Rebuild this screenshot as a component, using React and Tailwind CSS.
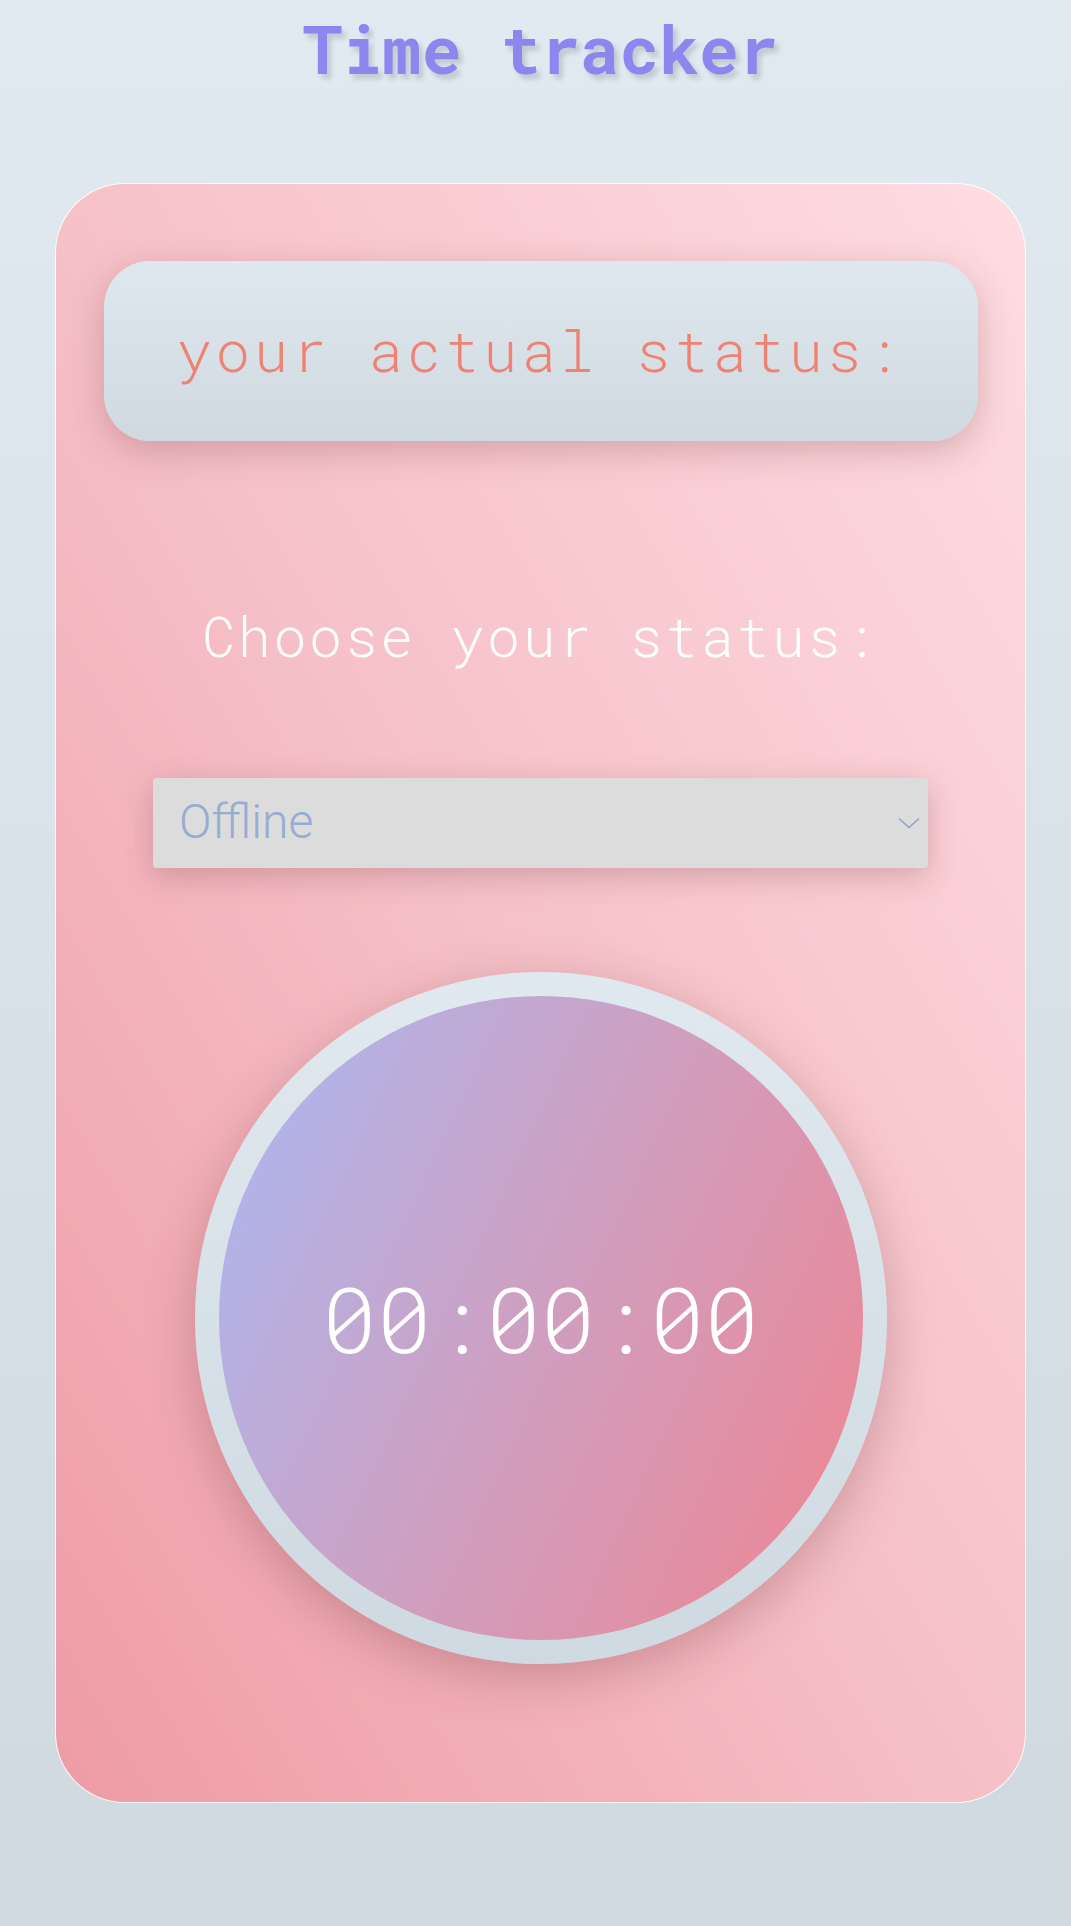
export default function App() {
  const mono = "font-['Roboto_Mono','DejaVu_Sans_Mono',monospace]";
  return (
    <div className="min-h-[1926px] w-full bg-linear-to-b from-[#e1e9f1] to-[#d0d8e0] overflow-hidden">
      <h1
        className={`${mono} pt-[16px] pl-[10px] text-center text-[66px] leading-none font-bold text-[#8b87ef] [text-shadow:4px_5px_5px_rgba(0,0,0,0.14)]`}
      >
        Time tracker
      </h1>

      <div className="ml-[55px] mt-[101px] w-[971px] h-[1620px] rounded-[70px] border border-white/90 bg-linear-to-tr from-[#ee9ba6] via-[#f6c1c8] to-[#fedde2] flex flex-col items-center pt-[77px]">
        <div className="w-[874px] h-[180px] rounded-[46px] bg-linear-to-b from-[#e0e8ef] to-[#d0d8e0] shadow-[0_10px_35px_rgba(120,60,70,0.28)] flex items-center justify-center">
          <span className={`${mono} font-light text-[57px] leading-none tracking-[4px] text-[#ef8272] -mt-[3px]`}>
            your actual status:
          </span>
        </div>

        <div className={`${mono} font-light mt-[167px] text-[55px] leading-none tracking-[2.6px] text-white`}>
          Choose your status:
        </div>

        <div className="mt-[115px] w-[775px] h-[90px] rounded-[4px] bg-[#dcdcdc] shadow-[0_8px_30px_rgba(120,60,70,0.28)] flex items-center justify-between pl-[26px] pr-[8px]">
          <span className="font-['Roboto',sans-serif] font-light text-[48px] leading-none text-[#97acd1] -mt-[2px]">
            Offline
          </span>
          <svg width="22" height="12" viewBox="0 0 22 12" fill="none">
            <path d="M1 1.5 L11 10.5 L21 1.5" stroke="#8fa2c4" strokeWidth="1.6" />
          </svg>
        </div>

        <div className="mt-[104px] w-[692px] h-[692px] rounded-full bg-linear-to-b from-[#e0e9ef] to-[#cfd9e1] p-[24px] shadow-[0_14px_50px_rgba(110,50,60,0.3)]">
          <div className="w-full h-full rounded-full bg-[linear-gradient(115deg,#a8b9f4_0%,#c8a4ca_40%,#f0848f_100%)] flex items-center justify-center">
            <span className={`${mono} font-light text-[91px] leading-none text-white`}>00:00:00</span>
          </div>
        </div>
      </div>
    </div>
  );
}
